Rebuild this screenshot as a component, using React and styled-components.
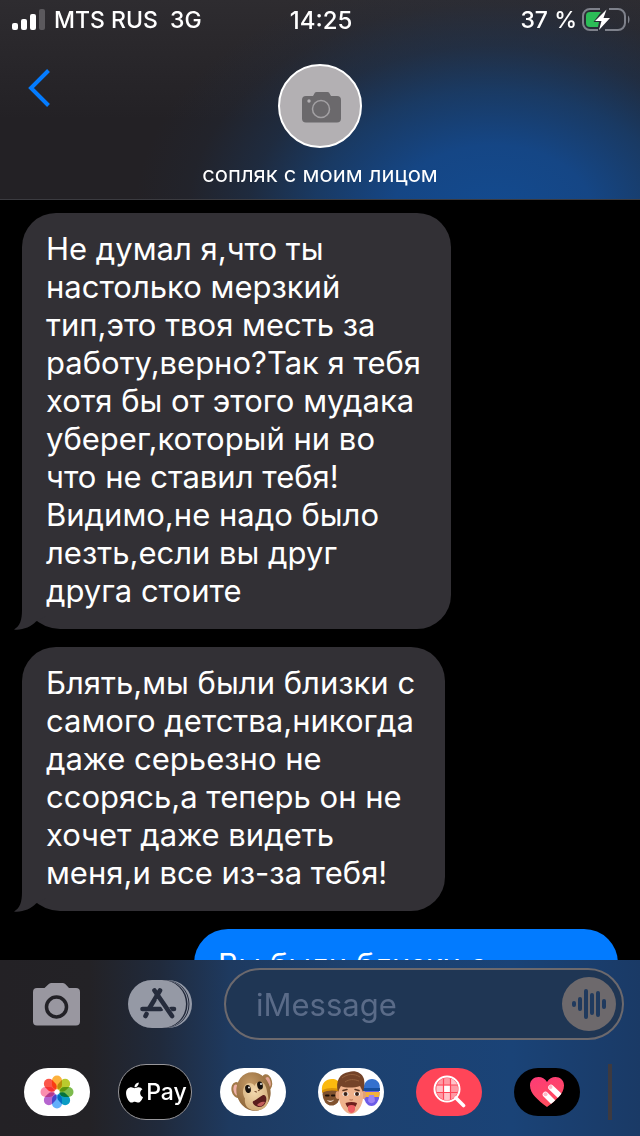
import React, { useState } from 'react';
import styled, { createGlobalStyle } from 'styled-components';
import { FaApple } from 'react-icons/fa';

const GlobalStyle = createGlobalStyle`
  * {
    box-sizing: border-box;
  }
  body {
    margin: 0;
    background: #000;
    color: #fff;
    font-family: Inter, 'Noto Sans', sans-serif;
  }
  button {
    display: flex;
    align-items: center;
    justify-content: center;
    padding: 0;
    border: none;
    background: none;
    color: inherit;
    font-family: inherit;
    cursor: pointer;
  }
  svg {
    display: block;
    flex-shrink: 0;
  }
`;

const Screen = styled.div`
  display: flex;
  flex-direction: column;
  height: 100vh;
  overflow: hidden;
`;

const Header = styled.header`
  flex-shrink: 0;
  border-bottom: 1px solid #3b3b40;
  background:
    radial-gradient(
      ellipse 56% 125% at 77% 108%,
      #134b90 0%,
      #154685 28%,
      rgba(22, 66, 120, 0.75) 50%,
      rgba(24, 58, 102, 0.4) 68%,
      rgba(28, 48, 78, 0.15) 85%,
      rgba(30, 44, 66, 0) 100%
    ),
    linear-gradient(to bottom, #2e2c30, #232125 60%);
`;

const StatusBar = styled.div`
  display: grid;
  grid-template-columns: 1fr auto 1fr;
  align-items: center;
  height: 40px;
  padding: 0 10px 0 12px;
  font-size: 23px;
  font-weight: 500;
`;

const StatusGroup = styled.div`
  display: flex;
  align-items: center;
  justify-content: ${({ $end }) => ($end ? 'flex-end' : 'flex-start')};
  gap: ${({ $end }) => ($end ? '5px' : '9px')};
  white-space: pre;
`;

const Clock = styled.span`
  font-size: 24px;
`;

const NavBar = styled.div`
  display: grid;
  grid-template-columns: 1fr auto 1fr;
  height: 159px;
  padding: 24px 28px 0;
`;

const BackButton = styled.button`
  align-self: start;
  justify-self: start;
  height: 48px;
`;

const Contact = styled.div`
  display: flex;
  flex-direction: column;
  align-items: center;
  gap: 12px;
`;

const Avatar = styled.button`
  width: 84px;
  height: 84px;
  border: 2px solid #fff;
  border-radius: 50%;
  background: #b3b0b3;
`;

const ContactName = styled.h1`
  margin: 0;
  font-size: 22px;
  font-weight: 400;
  line-height: 28px;
`;

const Messages = styled.main`
  display: flex;
  flex: 1;
  flex-direction: column;
  gap: 18px;
  min-height: 0;
  padding: 13px 22px 0;
  overflow: hidden;
`;

const Bubble = styled.p`
  position: relative;
  flex-shrink: 0;
  align-self: ${({ $sent }) => ($sent ? 'flex-end' : 'flex-start')};
  min-width: ${({ $sent }) => ($sent ? '424px' : '0')};
  margin: 0;
  padding: 17px 30px 19px 24px;
  border-radius: ${({ $sent }) => ($sent ? '34px' : '34px 34px 34px 38px')};
  background: ${({ $sent }) => ($sent ? '#027bff' : '#323035')};
  font-size: 31px;
  line-height: 38px;
  white-space: pre-line;
`;

const Tail = styled.svg`
  position: absolute;
  left: -8px;
  bottom: -1px;
`;

const Composer = styled.footer`
  display: flex;
  flex-direction: column;
  flex-shrink: 0;
  gap: 24px;
  padding: 8px 0 16px;
  background: linear-gradient(
    to right,
    #232125 0%,
    #232226 14%,
    #202a3c 25%,
    #1e3a60 36%,
    #1d416f 55%,
    #1a4377 80%,
    #1a3a66 100%
  );
`;

const InputRow = styled.form`
  display: flex;
  align-items: center;
  gap: 32px;
  padding: 0 16px 0 33px;
`;

const Tools = styled.div`
  display: flex;
  align-items: center;
  gap: 47px;
`;

const Field = styled.div`
  display: flex;
  flex: 1;
  align-items: center;
  height: 72px;
  min-width: 0;
  padding: 0 6px 0 30px;
  border: 2px solid #6c696d;
  border-radius: 36px;
  background: #1f3654;
`;

const TextInput = styled.input`
  flex: 1;
  min-width: 0;
  padding: 0;
  border: none;
  outline: none;
  background: transparent;
  color: #fff;
  font-family: inherit;
  font-size: 31px;
  &::placeholder {
    color: #5a6b88;
    opacity: 1;
  }
`;

const AudioButton = styled.button`
  width: 54px;
  height: 54px;
  border-radius: 50%;
  background: #6d696c;
`;

const AppStrip = styled.nav`
  display: flex;
  align-items: center;
  gap: 24px;
  padding: 0 20px;
`;

const AppSlot = styled.button`
  width: 74px;
  height: 56px;
`;

const AppPill = styled.span`
  display: flex;
  align-items: center;
  justify-content: center;
  width: ${({ $large }) => ($large ? '74px' : '66px')};
  height: ${({ $large }) => ($large ? '56px' : '48px')};
  border: ${({ $large }) => ($large ? '1px solid #98979b' : 'none')};
  border-radius: 28px;
  background: ${({ $color }) => $color};
  color: #fff;
  overflow: hidden;
`;

const PayText = styled.span`
  font-size: 23px;
  font-weight: 500;
`;

const StripDivider = styled.div`
  width: 4px;
  height: 56px;
  background: #3d3a40;
`;

const SignalIcon = () => (
  <svg width="33" height="22" viewBox="0 0 33 22" fill="#fff">
    <rect x="0" y="14" width="6" height="7" rx="2" />
    <rect x="9" y="10" width="6" height="11" rx="2" />
    <rect x="18" y="5" width="6" height="16" rx="2" />
    <rect x="27" y="0" width="6" height="21" rx="2" fill="#5b595d" />
  </svg>
);

const BatteryIcon = () => (
  <svg width="48" height="24" viewBox="0 0 48 24">
    <path d="M18 1H8a7 7 0 0 0-7 7v7a7 7 0 0 0 7 7h8M27 1h9a7 7 0 0 1 7 7v7a7 7 0 0 1-7 7H23" fill="none" stroke="#7e818b" strokeWidth="2" />
    <path d="M46 7.500c2 1.500 2 6.500 0 8z" fill="#7e818b" />
    <path d="M8 4h11l-7.500 10H17l-1 5H8c-3 0-4-1.500-4-4V8c0-2.500 1-4 4-4z" fill="#2cbd57" />
    <path d="M24.500 1.500 13 13h6.500L17 22l11-12h-6.500z" fill="#fff" />
  </svg>
);

const AvatarCamera = () => (
  <svg width="42" height="34" viewBox="-3 -3 42 34">
    <path d="M4 4h7l2-3.500q.5-.5 1.500-.5h11q1 0 1.500.5L29 4h6q4 0 4 4v18.500q0 4-4 4H4q-4 0-4-4V8q0-4 4-4z" fill="#6b696c" />
    <circle cx="19" cy="17" r="8.500" fill="none" stroke="#a3a1a4" strokeWidth="1.500" />
    <circle cx="7" cy="9" r="1.700" fill="#b3b0b3" />
  </svg>
);

const CameraIcon = () => (
  <svg width="48" height="43" viewBox="0 0 48 43">
    <path d="M4 5h7.500l4-3.800Q17 0 18.500 0h11q1.500 0 3 1.200L36 5h7q4 0 4 4v29.500q0 4-4 4H4q-4 0-4-4V9q0-4 4-4z" fill="#9997a0" />
    <circle cx="23.500" cy="24" r="10" fill="none" stroke="#222126" strokeWidth="3.500" />
  </svg>
);

const AppStoreIcon = () => (
  <svg width="64" height="48" viewBox="0 0 64 48">
    <rect x="4" width="60" height="48" rx="24" fill="#949aa8" />
    <rect x="1.500" width="60" height="48" rx="24" fill="#202738" />
    <rect x="0.500" width="60" height="48" rx="24" fill="#949aa8" />
    <rect x="0" width="59.500" height="48" rx="24" fill="#202738" />
    <rect width="58" height="48" rx="24" fill="#9599a5" />
    <g fill="none" stroke="#262c3c" strokeWidth="4.600" strokeLinecap="round">
      <path d="M32 10.500 21.500 28M18.500 34l-1 2" />
      <path d="M14.500 29h18.500M43 29h3" />
      <path d="M31 18 43 36" stroke="#9599a5" strokeWidth="6.500" strokeLinecap="butt" />
      <path d="M26.500 10.500 44 36" />
    </g>
  </svg>
);

const AudioIcon = () => (
  <svg width="36" height="32" viewBox="0 0 36 32" fill="none" stroke="#203a5e" strokeWidth="4" strokeLinecap="round">
    <path d="M3 15v2M9 11v10M15 3v26M21 7v18M27 5v22M33 13v6" />
  </svg>
);

const petals = ['#fdb13c', '#b9cb2e', '#7dbb4d', '#0a9cc4', '#62b0fb', '#b665cf', '#fb8fae', '#fb564a'];

const PhotosIcon = () => (
  <svg width="34" height="34" viewBox="-17 -17 34 34">
    {petals.map((color, i) => (
      <rect
        key={color}
        x="-5"
        y="-16.500"
        width="10"
        height="14"
        rx="5"
        fill={color}
        transform={`rotate(${i * 45})`}
        style={{ mixBlendMode: 'multiply' }}
      />
    ))}
  </svg>
);

const MonkeyIcon = () => (
  <svg width="44" height="44" viewBox="0 0 44 44">
    <defs>
      <radialGradient id="fur" cx="45%" cy="30%" r="70%">
        <stop offset="0" stopColor="#c49a66" />
        <stop offset="1" stopColor="#8a6236" />
      </radialGradient>
      <radialGradient id="face" cx="45%" cy="35%" r="70%">
        <stop offset="0" stopColor="#f3d9ae" />
        <stop offset="1" stopColor="#d0aa75" />
      </radialGradient>
    </defs>
    <ellipse cx="6" cy="20" rx="5.500" ry="8" fill="#a27a4a" transform="rotate(-12 6 20)" />
    <ellipse cx="5.500" cy="20" rx="3" ry="5.500" fill="#eeb0a6" transform="rotate(-12 5.500 20)" />
    <ellipse cx="36" cy="12" rx="5" ry="8" fill="#a27a4a" transform="rotate(-15 36 12)" />
    <ellipse cx="37" cy="12" rx="2.500" ry="5" fill="#e2a394" transform="rotate(-15 37 12)" />
    <ellipse cx="22.500" cy="21.500" rx="17" ry="19.500" fill="url(#fur)" transform="rotate(-14 22.500 21.500)" />
    <path d="M13 17c2-5 8-5 11-1 0-4 7-6 10-1 2 4 2 7 3 11 2 9-4 14.500-12 14.500-8 0-12-5-11-12-2-3-3-8-1-11.500z" fill="url(#face)" />
    <ellipse cx="17" cy="19" rx="2.800" ry="4" fill="#16100c" transform="rotate(-12 17 19)" />
    <ellipse cx="29" cy="15.500" rx="2.800" ry="4" fill="#16100c" transform="rotate(-12 29 15.500)" />
    <circle cx="18" cy="17.500" r="0.900" fill="#fff" />
    <circle cx="30" cy="14" r="0.900" fill="#fff" />
    <path d="M24 21.500l1.500.5M27.500 20.500l1.200-.8" stroke="#7a4f30" strokeWidth="1.200" strokeLinecap="round" />
    <path d="M22.500 31c3-1 7-5 9.500-6 3-.5 4 3 3 6.500-1.500 5-6 6.500-9 5-3.500-1-5.500-4.500-3.500-5.500z" fill="#5a1d1c" />
    <path d="M26 35c2-2.500 5-4 8-3-1.500 4-5 5.500-8 3z" fill="#c4605c" />
  </svg>
);

const MemojiIcon = () => (
  <svg width="66" height="48" viewBox="0 0 66 48">
    <ellipse cx="13.500" cy="26" rx="9" ry="11.500" fill="#80522f" />
    <path d="M4 23c-1-8 4-12 10-12 4 0 7 2 8 5v7c-6-2-12-2-18 0z" fill="#fbb90f" />
    <path d="M4 22.500c6-3 12-3 18-1v2.500c-6-2-12-2-18 1z" fill="#d9920a" />
    <path d="M8 27.500h2.500M14 27.500h2.500" stroke="#1c100a" strokeWidth="2" strokeLinecap="round" />
    <path d="M9 32c2.500 1 5 1 7-.5-1 3-5 3.500-7 .5z" fill="#e9d8cb" />
    <ellipse cx="53.500" cy="26" rx="8" ry="12" fill="#6d5de8" />
    <path d="M46 22c-1-7 3-11 8-11s9 4 7.500 11z" fill="#3571ce" />
    <path d="M45 20h17v3H45z" fill="#174f9e" />
    <path d="M46 24h16l-1 5H47z" fill="#f3b13c" />
    <path d="M51 27h5l1 6c-2 3-5 3-7 0z" fill="#9b83f5" />
    <ellipse cx="20" cy="27" rx="2.500" ry="4" fill="#e3a078" />
    <ellipse cx="45.500" cy="27" rx="2.500" ry="4" fill="#e3a078" />
    <path d="M21 18h24v11c0 8-6 17-12 17s-12-9-12-17z" fill="#efb28c" />
    <path d="M20 24c-3-11 2-19 11-20 5-2 13 0 15 7 1 5 0 9-1 13-1-2-2-4-3-6-6 2-15 2-19 0-1 2-2 3-3 6z" fill="#744328" />
    <path d="M24 10c5-4 12-5 18-1M27 14c4-3 9-3 14-1" fill="none" stroke="#93603d" strokeWidth="1" />
    <path d="M25 22.500l4-1M37 21.500l4 1" stroke="#5f3620" strokeWidth="1.500" strokeLinecap="round" />
    <ellipse cx="27.500" cy="26" rx="3" ry="2" fill="#fff" />
    <ellipse cx="39" cy="26" rx="3" ry="2" fill="#fff" />
    <circle cx="27.500" cy="26" r="2" fill="#3b2218" />
    <circle cx="39" cy="26" r="2" fill="#3b2218" />
    <path d="M31.500 31.500q1.700 1.200 3.400 0" fill="none" stroke="#c27a58" strokeWidth="1.200" />
    <path d="M27.500 35c4-1.500 8-1.500 11.500 0-1 4-3 5.500-5.700 5.500S28.500 39 27.500 35z" fill="#6e201d" />
    <path d="M30 38c2-1.500 5-1.500 7 0v4c-1 4-6 4-7 0z" fill="#ec5e62" />
  </svg>
);

const SearchImagesIcon = () => (
  <svg width="34" height="34" viewBox="0 0 34 34">
    <defs>
      <clipPath id="lens">
        <circle cx="15" cy="14" r="11" />
      </clipPath>
    </defs>
    <g clipPath="url(#lens)">
      <rect x="2" y="1" width="26" height="26" fill="#ff9aa4" />
      <path d="M12 10.500h6v6.500h-6z" fill="#fff" />
      <path d="M5 10.500h6V17H5zM12 18h6v7h-6zM19 4h6v6h-6z" fill="#ffc3c9" />
      <path d="M11.500 2v24M18.500 2v24M3 10h24M3 17.500h24" stroke="#ff4558" strokeWidth="1.200" />
    </g>
    <circle cx="15" cy="14" r="12.500" fill="none" stroke="#fff" strokeWidth="2" />
    <path d="M24 23l7.500 7.500" stroke="#fff" strokeWidth="3.600" strokeLinecap="round" />
  </svg>
);

const HeartIcon = () => (
  <svg width="34" height="32" viewBox="0 0 34 32">
    <defs>
      <linearGradient id="heart" x1="0" y1="0" x2="0.300" y2="1">
        <stop offset="0" stopColor="#fd3a78" />
        <stop offset="1" stopColor="#ff4d5e" />
      </linearGradient>
      <clipPath id="heartShape">
        <path d="M17 31C8 24 0 18 0 9.500 0 4 4 1 8.500 1 12 1 15 2.500 17 6c2-3.500 5-5 8.500-5C30 1 34 4 34 9.500 34 18 26 24 17 31z" />
      </clipPath>
    </defs>
    <g clipPath="url(#heartShape)">
      <rect width="34" height="32" fill="url(#heart)" />
      <path d="M21 11.500 34 24M15.500 18.500 28 31" stroke="#fff" strokeWidth="5.600" strokeLinecap="round" />
      <circle cx="20.500" cy="11" r="2" fill="#ffb9c9" />
      <circle cx="15.500" cy="18.200" r="2" fill="#ffb9c9" />
    </g>
  </svg>
);

const messages = [
  {
    id: 1,
    text: `Не думал я,что ты
настолько мерзкий
тип,это твоя месть за
работу,верно?Так я тебя
хотя бы от этого мудака
уберег,который ни во
что не ставил тебя!
Видимо,не надо было
лезть,если вы друг
друга стоите`,
  },
  {
    id: 2,
    text: `Блять,мы были близки с
самого детства,никогда
даже серьезно не
ссорясь,а теперь он не
хочет даже видеть
меня,и все из-за тебя!`,
  },
  { id: 3, sent: true, text: 'Вы были близки с' },
];

const apps = [
  { name: 'Photos', color: '#fff', icon: <PhotosIcon /> },
  {
    name: 'Apple Pay',
    color: '#000',
    large: true,
    icon: (
      <>
        <FaApple size={23} />
        <PayText>Pay</PayText>
      </>
    ),
  },
  { name: 'Animoji', color: '#fff', icon: <MonkeyIcon /> },
  { name: 'Memoji', color: '#fff', icon: <MemojiIcon /> },
  { name: 'Images', color: '#ff4558', icon: <SearchImagesIcon /> },
  { name: 'Digital Touch', color: '#000', icon: <HeartIcon /> },
];

const App = () => {
  const [draft, setDraft] = useState('');

  return (
    <Screen>
      <GlobalStyle />
      <Header>
        <StatusBar>
          <StatusGroup>
            <SignalIcon />
            <span>MTS RUS  3G</span>
          </StatusGroup>
          <Clock>14:25</Clock>
          <StatusGroup $end>
            <span>37 %</span>
            <BatteryIcon />
          </StatusGroup>
        </StatusBar>
        <NavBar>
          <BackButton type="button" aria-label="Back">
            <svg width="22" height="38" viewBox="0 0 22 38" fill="none" stroke="#047cff" strokeWidth="4">
              <path d="M20.500 1.500 3 19l17.500 17.500" />
            </svg>
          </BackButton>
          <Contact>
            <Avatar type="button" aria-label="Contact photo">
              <AvatarCamera />
            </Avatar>
            <ContactName>сопляк с моим лицом</ContactName>
          </Contact>
        </NavBar>
      </Header>
      <Messages>
        {messages.map((message) => (
          <Bubble key={message.id} $sent={message.sent}>
            {message.text}
            {!message.sent && (
              <Tail width="32" height="44" viewBox="0 -10 32 44" fill="#323035" aria-hidden="true">
                <path d="M8-10v24C8 24 6 30 0 33.500 8 34.500 17 31 22 25.500L32 20V-10z" />
              </Tail>
            )}
          </Bubble>
        ))}
      </Messages>
      <Composer>
        <InputRow onSubmit={(e) => e.preventDefault()}>
          <Tools>
            <button type="button" aria-label="Camera">
              <CameraIcon />
            </button>
            <button type="button" aria-label="Apps">
              <AppStoreIcon />
            </button>
          </Tools>
          <Field>
            <TextInput
              aria-label="iMessage"
              placeholder="iMessage"
              value={draft}
              onChange={(e) => setDraft(e.target.value)}
            />
            <AudioButton type="button" aria-label="Record audio">
              <AudioIcon />
            </AudioButton>
          </Field>
        </InputRow>
        <AppStrip>
          {apps.map((app) => (
            <AppSlot key={app.name} type="button" aria-label={app.name}>
              <AppPill $color={app.color} $large={app.large}>
                {app.icon}
              </AppPill>
            </AppSlot>
          ))}
          <StripDivider />
        </AppStrip>
      </Composer>
    </Screen>
  );
};

export default App;
